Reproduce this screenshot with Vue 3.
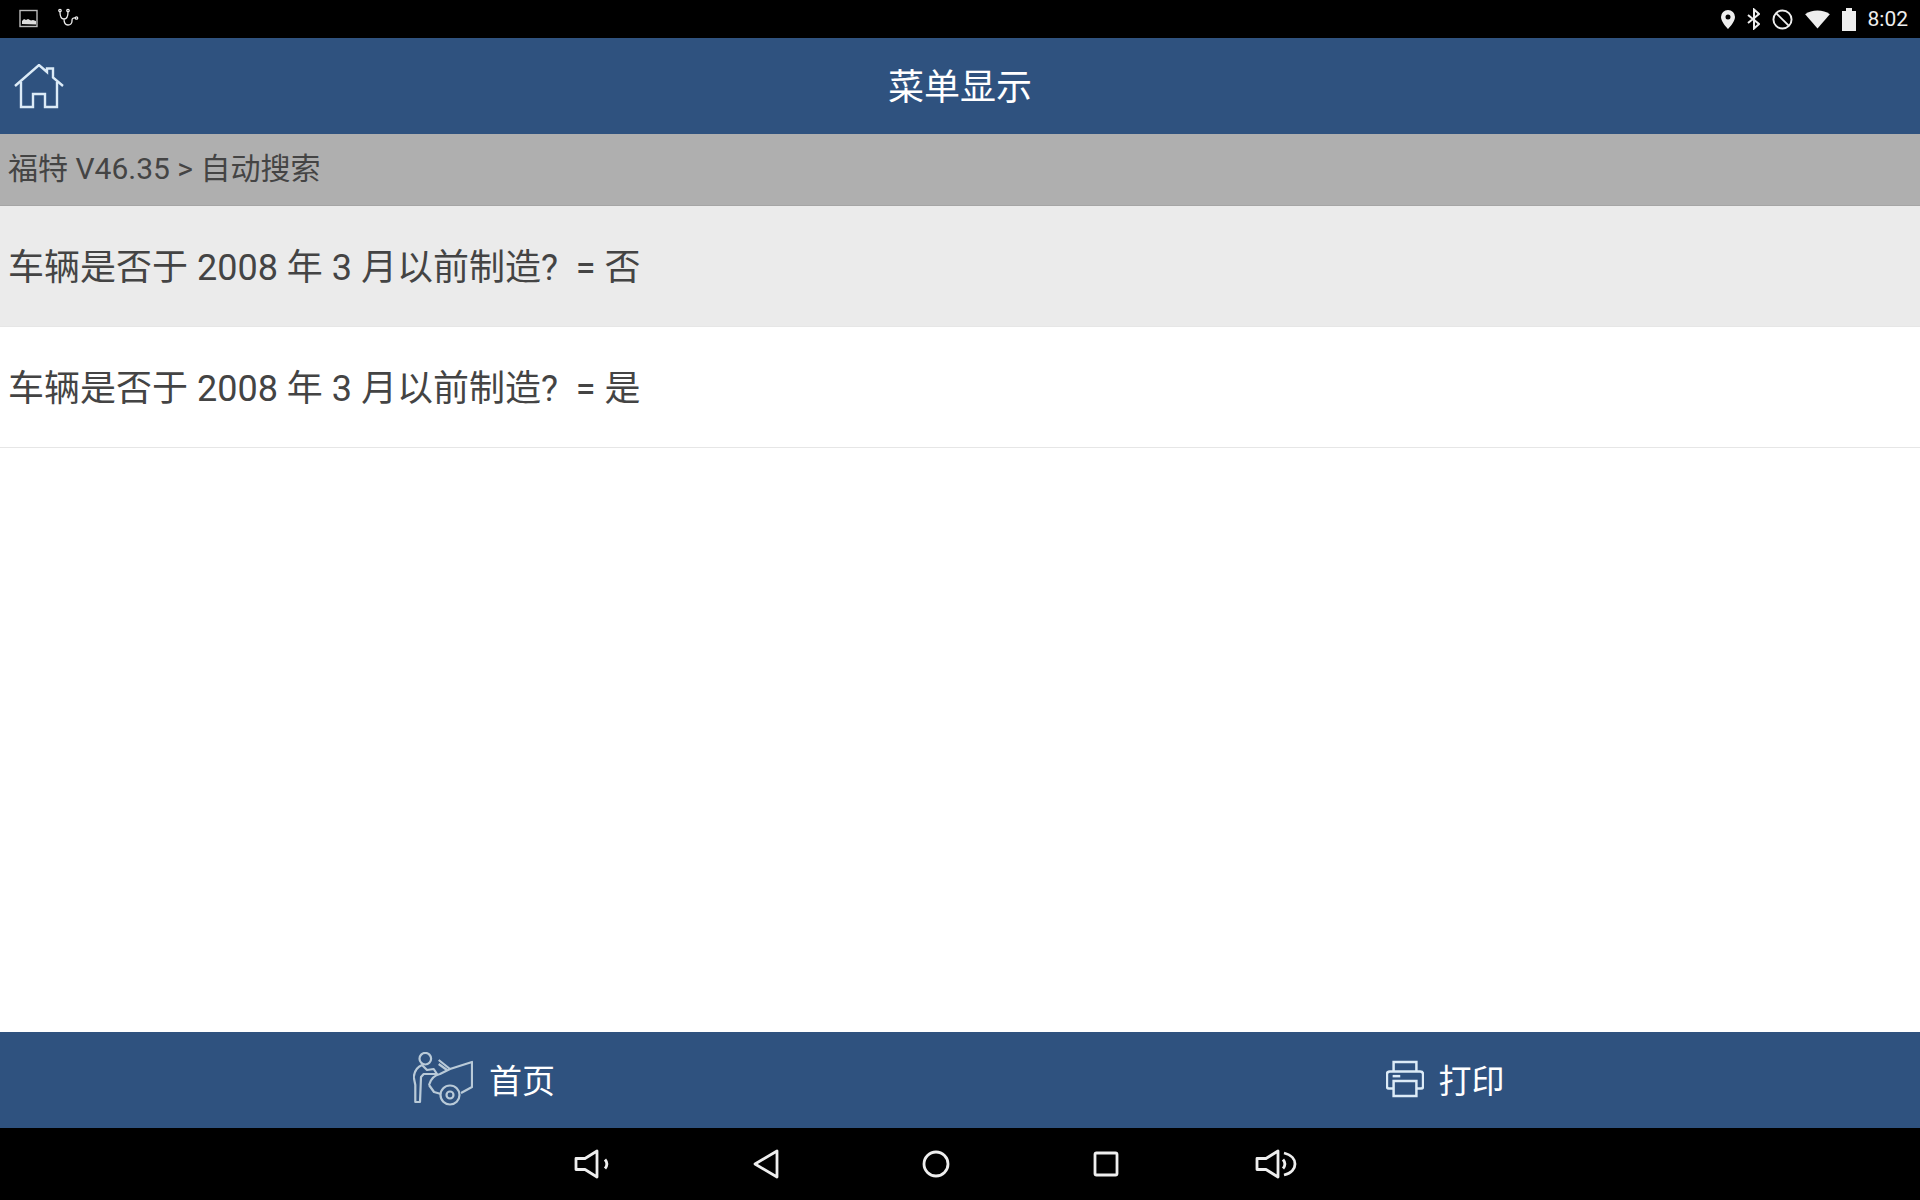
<template>
  <div class="screen">
    <div class="status-bar">
      <div class="status-left">
        <svg width="20" height="20" viewBox="0 0 20 20">
          <rect x="1" y="1.500" width="17" height="16" fill="none" stroke="#bbb" stroke-width="1.400" />
          <path d="M3 15v-3l2-2 2 1 2-1 3 1.500 2-.5 3 1v3.500z" fill="#ddd" />
        </svg>
        <svg width="24" height="24" viewBox="0 0 24 24" fill="none" stroke="#eee" stroke-width="1.300">
          <circle cx="3" cy="3.500" r="1.200" />
          <circle cx="11" cy="3.500" r="1.200" />
          <circle cx="19.500" cy="11" r="1.200" />
          <path d="M3 5c0 5 1.500 7 4 7s4-2 4-7M7 12c0 4 1.500 6 4 6s4-2 4-4v-1c0-1.500 1.500-2.500 3.500-2" />
        </svg>
      </div>
      <div class="status-right">
        <svg width="14" height="21" viewBox="2 2.500 14 20">
          <path fill-rule="evenodd" d="M9 3a7 7 0 0 0-7 7c0 5 7 12 7 12s7-7 7-12a7 7 0 0 0-7-7zm0 4.500a2.500 2.500 0 1 1 0 5 2.500 2.500 0 0 1 0-5z" fill="#eee" />
        </svg>
        <svg width="13" height="22" viewBox="1 1 13 22" fill="none" stroke="#eee" stroke-width="2">
          <path d="M2 8l11 9-5 4.500v-19l5 4.500-11 9" />
        </svg>
        <svg width="21" height="21" viewBox="0 0 22 22" fill="none" stroke="#eee" stroke-width="2">
          <circle cx="11" cy="11" r="9.500" />
          <path d="M4.300 4.300l13.400 13.400" />
        </svg>
        <svg width="25" height="19" viewBox="0 0 26 20">
          <path d="M0 4.500C3.500 1.800 8 .5 13 .5s9.500 1.300 13 4L13 19.500z" fill="#eee" />
        </svg>
        <svg width="14" height="23" viewBox="0 0 14 23">
          <path d="M0 3h4V0h6v3h4v20H0z" fill="#eee" />
        </svg>
        <span class="clock">8:02</span>
      </div>
    </div>

    <header class="top-bar">
      <svg class="home-icon" width="50" height="46" viewBox="0 0 50 46" fill="none" stroke="#dcebf7" stroke-width="2.400">
        <path d="M1 22L25 1l8 7V4.500h6v9L49 22" />
        <path d="M7 18v25h12V30h12v13h12V18" />
      </svg>
      <h1 class="title">菜单显示</h1>
    </header>

    <div class="crumb">{{ crumb }}</div>

    <ul class="menu">
      <li v-for="(item, index) in items" :key="index" class="menu-item" :class="{ active: index === 0 }">
        {{ item }}
      </li>
    </ul>

    <footer class="bottom-bar">
      <div class="bottom-btn">
        <svg width="60" height="54" viewBox="0 0 60 54" fill="none" stroke="#b9cad8" stroke-width="2.200" stroke-linejoin="round">
          <circle cx="12.300" cy="6.700" r="5.800" />
          <path d="M9 13C4 15 1.500 19 .7 25l1.600 8v17h4.700L8 25l2.700-3H24l-3.300-5L14 18z" />
          <path d="M25.700 8L37 17l22-7v25l-11 6" />
          <path d="M25.700 12L34 18" />
          <path d="M16 33c2-7 6-10 11-11l10-5M16 33l5 7 7 2" />
          <circle cx="37" cy="43" r="9.500" />
          <circle cx="37" cy="43" r="3.500" />
        </svg>
        <span>首页</span>
      </div>
      <div class="bottom-btn print">
        <svg width="38" height="38" viewBox="0 0 40 40" fill="none" stroke="#dcebf7" stroke-width="2.600">
          <path d="M8 12V2h24v10" />
          <path d="M8 30H3c-1 0-2-1-2-2V15c0-2 1-3 3-3h32c2 0 3 1 3 3v13c0 1-1 2-2 2h-5" />
          <path d="M8 22h24v16H8z" />
          <path d="M7 17h8" />
        </svg>
        <span>打印</span>
      </div>
    </footer>

    <nav class="nav-bar">
      <svg class="vol-down" width="38" height="30" viewBox="0 0 38 30" fill="none" stroke="#eee" stroke-width="2.800" stroke-linejoin="round">
        <path d="M2 9.500h9L23 2v26l-12-7.500H2z" />
        <path d="M31 10.500c2.500 3 2.500 6 0 9" />
      </svg>
      <svg width="26" height="30" viewBox="0 0 26 30" fill="none" stroke="#eee" stroke-width="2.800" stroke-linejoin="round">
        <path d="M24 2v26L2 15z" />
      </svg>
      <svg width="28" height="28" viewBox="0 0 28 28" fill="none" stroke="#eee" stroke-width="2.800">
        <circle cx="14" cy="14" r="12" />
      </svg>
      <svg width="26" height="26" viewBox="0 0 26 26" fill="none" stroke="#eee" stroke-width="2.800">
        <rect x="2" y="2" width="22" height="22" rx="1.500" />
      </svg>
      <svg class="vol-up" width="42" height="32" viewBox="0 0 42 32" fill="none" stroke="#eee" stroke-width="2.800" stroke-linejoin="round">
        <path d="M2 10.500h9L23 3v26l-12-7.500H2z" />
        <path d="M28 11.500c2.500 3 2.500 6 0 9" />
        <path d="M29 5c8 2 11 7 11 11s-3 9-11 11" />
      </svg>
    </nav>
  </div>
</template>

<script setup>
const crumb = '福特 V46.35 > 自动搜索'

const items = [
  '车辆是否于 2008 年 3 月以前制造?  = 否',
  '车辆是否于 2008 年 3 月以前制造?  = 是',
]
</script>

<style>
html,
body {
  margin: 0;
  background: #fff;
}
</style>

<style scoped>
.screen {
  width: 1920px;
  height: 1200px;
  display: flex;
  flex-direction: column;
  overflow: hidden;
  font-family: Roboto, "Noto Sans CJK SC", sans-serif;
  color: #444;
}

.status-bar {
  height: 38px;
  background: #000;
  display: flex;
  justify-content: space-between;
  align-items: center;
  padding: 0 12px 0 19px;
}

.status-left {
  display: flex;
  align-items: center;
  gap: 18px;
}

.status-right {
  display: flex;
  align-items: center;
  gap: 12px;
}

.clock {
  font-size: 21px;
  color: #eee;
}

.top-bar {
  height: 96px;
  box-sizing: border-box;
  padding-bottom: 4px;
  background: #2f527f;
  display: flex;
  align-items: center;
  justify-content: center;
  position: relative;
}

.home-icon {
  position: absolute;
  left: 14px;
  top: 26px;
}

.title {
  margin: 0;
  font-size: 36px;
  font-weight: 400;
  color: #fff;
}

.crumb {
  height: 72px;
  line-height: 70px;
  padding-left: 8px;
  background: #afafaf;
  font-size: 30px;
  color: #444;
  box-sizing: border-box;
  border-bottom: 1px solid #a5a5a5;
}

.menu {
  flex: 1;
  margin: 0;
  padding: 0;
  list-style: none;
}

.menu-item {
  height: 121px;
  box-sizing: border-box;
  line-height: 118px;
  padding: 3px 0 0 8px;
  font-size: 36px;
  white-space: pre;
  color: #444;
  border-bottom: 1px solid #e6e6e6;
}

.menu-item.active {
  background: #ebebeb;
}

.bottom-bar {
  height: 96px;
  background: #2f527f;
  display: grid;
  grid-template-columns: 1fr 1fr;
}

.bottom-btn {
  display: flex;
  align-items: center;
  justify-content: center;
  gap: 16px;
  padding: 0 0 2px 8px;
  font-size: 33px;
  color: #fff;
}

.bottom-btn.print {
  gap: 15px;
  padding-left: 10px;
}

.nav-bar {
  height: 72px;
  background: #000;
  display: flex;
  align-items: center;
  gap: 143px;
  padding-left: 574px;
}

.vol-down {
  margin-right: -2px;
}

.vol-up {
  margin-left: -7px;
}
</style>
